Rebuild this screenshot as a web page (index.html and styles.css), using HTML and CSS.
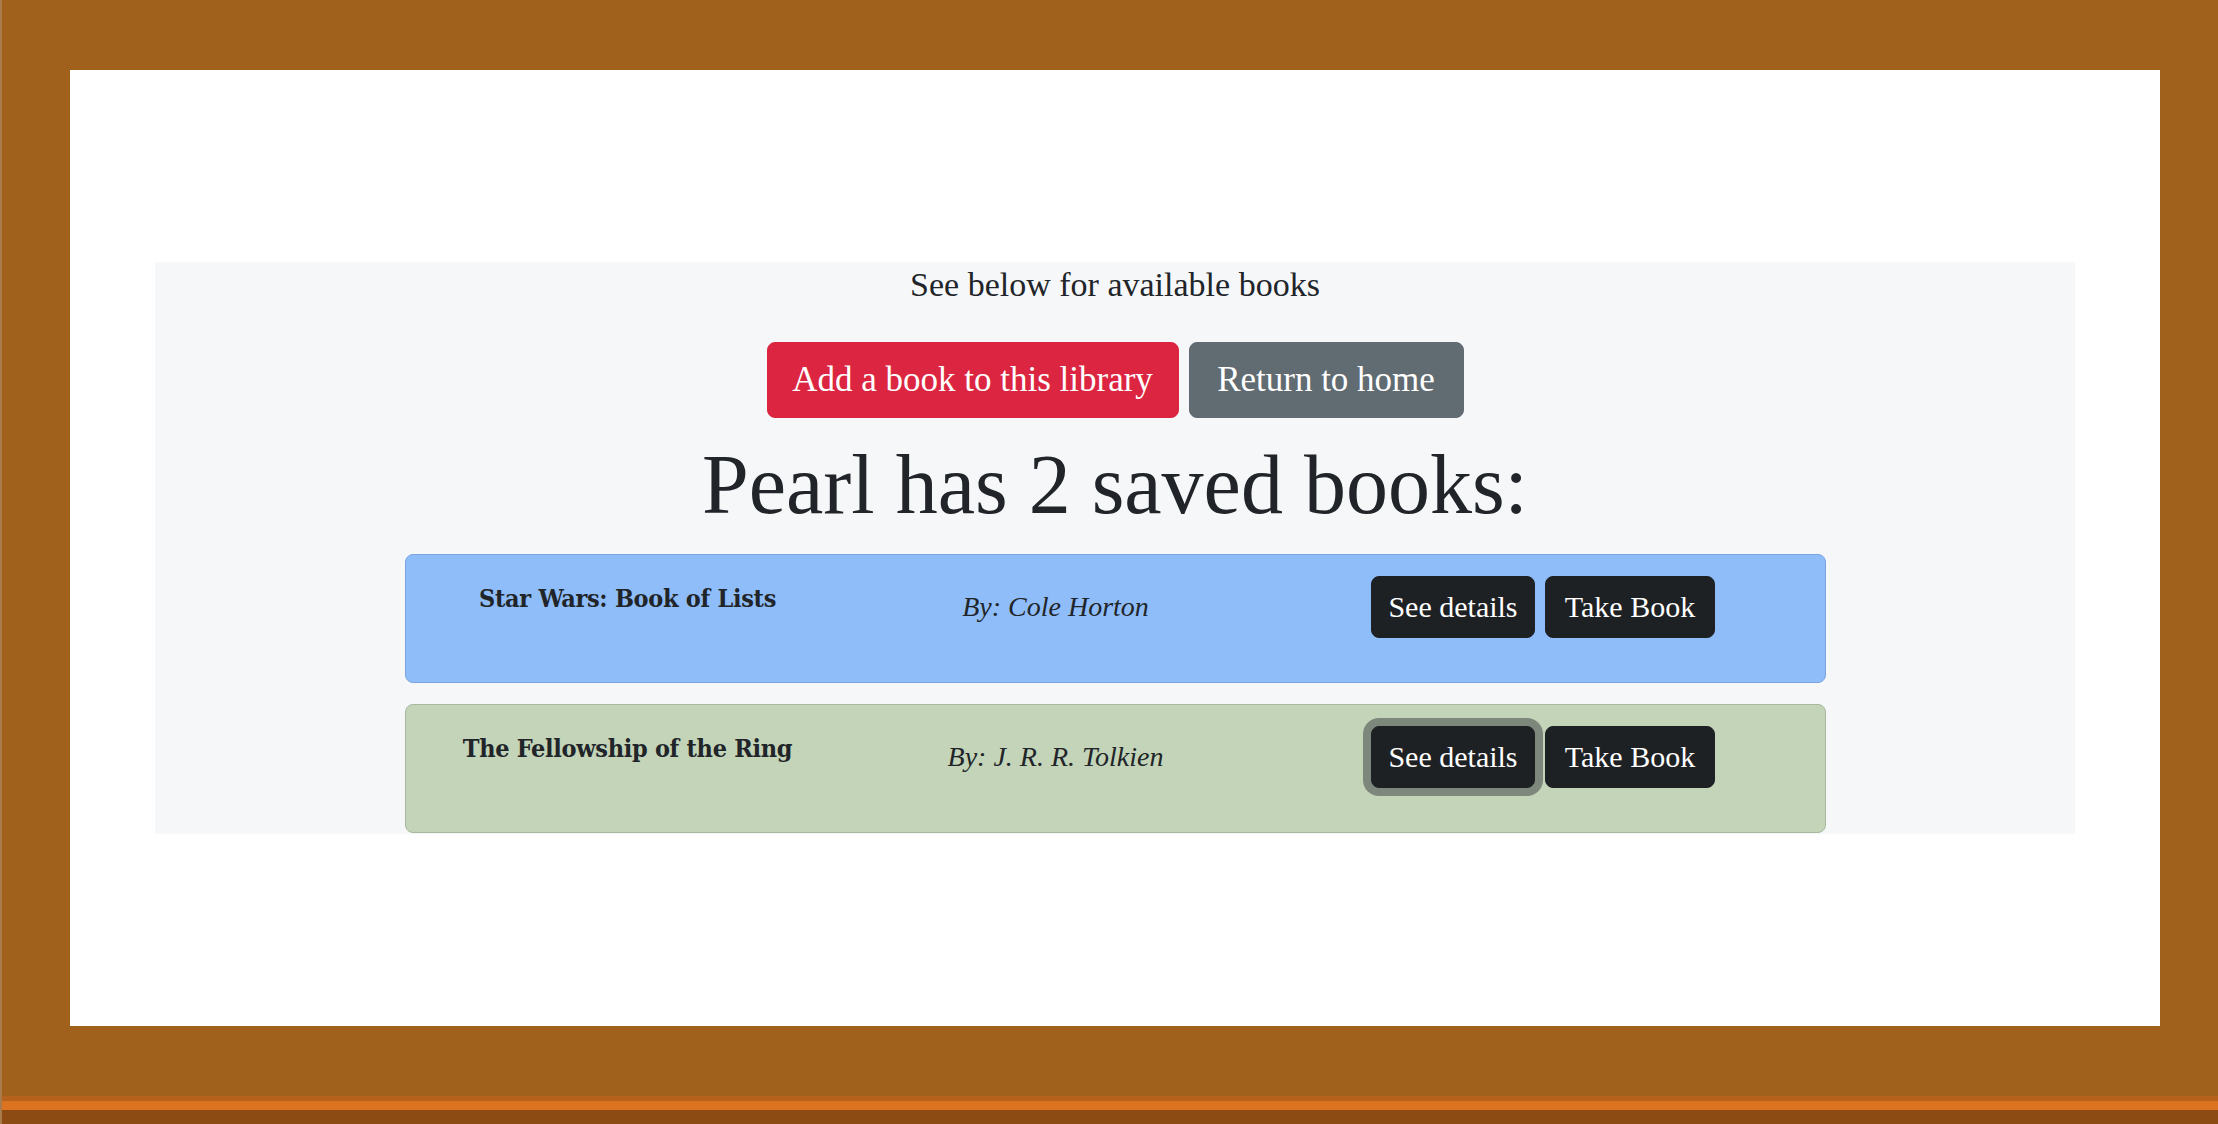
FILE: index.html
```html
<!DOCTYPE html>
<html lang="en">
<head>
<meta charset="utf-8">
<title>Library</title>
<link rel="stylesheet" href="styles.css">
</head>
<body>
<div class="frame">
  <main class="library">
    <p class="intro">See below for available books</p>
    <div class="actions">
      <button class="btn btn-lg btn-danger">Add a book to this library</button>
      <button class="btn btn-lg btn-secondary">Return to home</button>
    </div>
    <h1 class="heading">Pearl has 2 saved books:</h1>
    <div class="book book-blue">
      <div class="book-title">Star Wars: Book of Lists</div>
      <div class="book-author">By: Cole Horton</div>
      <div class="book-actions">
        <button class="btn btn-dark btn-details">See details</button>
        <button class="btn btn-dark btn-take">Take Book</button>
      </div>
    </div>
    <div class="book book-green">
      <div class="book-title">The Fellowship of the Ring</div>
      <div class="book-author">By: J. R. R. Tolkien</div>
      <div class="book-actions">
        <button class="btn btn-dark btn-details is-focused">See details</button>
        <button class="btn btn-dark btn-take">Take Book</button>
      </div>
    </div>
  </main>
</div>
<div class="floor">
  <div class="band band-mid"></div>
  <div class="band band-bright"></div>
  <div class="band band-dark"></div>
</div>
</body>
</html>
```
FILE: styles.css
```css
html, body {
  margin: 0;
  padding: 0;
}
body {
  background: #a0611d;
  border-left: 2px solid #a97b4c;
  width: 2216px;
  height: 1124px;
  overflow: hidden;
  font-family: "Liberation Serif", "Times New Roman", serif;
  color: #212529;
}
.frame {
  margin: 70px 58px 0 68px;
  height: 956px;
  background: #ffffff;
  padding-top: 192px;
  box-sizing: border-box;
}
.library {
  width: 1920px;
  height: 572px;
  margin: 0 auto;
  background: #f6f7f9;
  display: flex;
  flex-direction: column;
  align-items: center;
}
.intro {
  margin: 0;
  padding-top: 1px;
  font-size: 34px;
  line-height: 43px;
  text-align: center;
}
.actions {
  margin-top: 36px;
  display: flex;
  gap: 10px;
}
.btn {
  font-family: "Liberation Serif", "Times New Roman", serif;
  color: #ffffff;
  border: 1px solid transparent;
  border-radius: 8px;
  cursor: pointer;
  text-align: center;
  box-sizing: border-box;
}
.btn-lg {
  font-size: 35px;
  line-height: 52px;
  padding: 11px 0;
}
.btn-danger {
  width: 412px;
  background: #dc2641;
  border-color: #dc2641;
}
.btn-secondary {
  width: 275px;
  background: #616b72;
  border-color: #616b72;
}
.heading {
  margin: 16px 0 18px;
  font-size: 84px;
  font-weight: 400;
  line-height: 102px;
  text-align: center;
}
.book {
  width: 1421px;
  box-sizing: border-box;
  border: 1px solid;
  border-radius: 8px;
  padding: 21px 8px 44px;
  display: grid;
  grid-template-columns: 428px 428px 1fr;
  align-items: start;
}
.book + .book {
  margin-top: 21px;
}
.book-blue {
  background: #8fbdf9;
  border-color: #79a4e0;
}
.book-green {
  background: #c3d4b8;
  border-color: #a8b89e;
}
.book-title {
  font-family: "DejaVu Serif Condensed", "DejaVu Serif", serif;
  font-weight: 700;
  font-size: 25px;
  line-height: 32px;
  padding-top: 7px;
  text-align: center;
  letter-spacing: -0.3px;
}
.book-author {
  font-style: italic;
  font-size: 28px;
  line-height: 32px;
  padding-top: 15px;
  text-align: center;
}
.book-actions {
  display: flex;
  justify-content: center;
  gap: 10px;
}
.btn-dark {
  background: #1e2124;
  border-color: #1e2124;
  font-size: 30px;
  line-height: 44px;
  padding: 8px 0;
}
.btn-details {
  width: 164px;
}
.btn-take {
  width: 170px;
}
.is-focused {
  box-shadow: 0 0 0 8px #7d877b;
}
.floor {
  height: 98px;
  display: flex;
  flex-direction: column;
  justify-content: flex-end;
}
.band-mid {
  height: 5px;
  background: #b5631c;
}
.band-bright {
  height: 9px;
  background: #dc7321;
}
.band-dark {
  height: 14px;
  background: #8b4b13;
}
```
